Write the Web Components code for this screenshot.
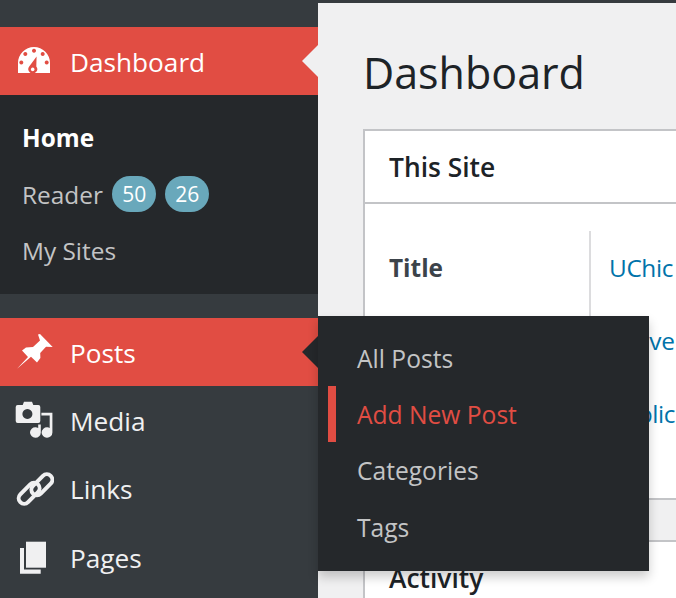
<!DOCTYPE html>
<html lang="en">
<head>
<meta charset="utf-8">
<title>Dashboard</title>
<style>
    html, body { margin: 0; height: 598px; overflow: hidden; background: #f0f0f1; }
    body { font-family: "Open Sans", "Liberation Sans", sans-serif; }
</style>
</head>
<body>
<wp-shell>
    <wp-sidebar slot="side">
        <wp-menu-item icon="dashboard" label="Dashboard" active arrow="#f0f0f1"></wp-menu-item>
        <wp-submenu>
            <wp-sub-item strong>Home</wp-sub-item>
            <wp-sub-item>Reader <wp-badge>50</wp-badge><wp-badge>26</wp-badge></wp-sub-item>
            <wp-sub-item>My Sites</wp-sub-item>
        </wp-submenu>
        <wp-menu-item class="after-sub" icon="pin" label="Posts" active arrow="#25282b">
            <wp-flyout>
                <wp-sub-item fly>All Posts</wp-sub-item>
                <wp-sub-item fly current>Add New Post</wp-sub-item>
                <wp-sub-item fly>Categories</wp-sub-item>
                <wp-sub-item fly>Tags</wp-sub-item>
            </wp-flyout>
        </wp-menu-item>
        <wp-menu-item icon="media" label="Media"></wp-menu-item>
        <wp-menu-item icon="links" label="Links"></wp-menu-item>
        <wp-menu-item icon="pages" label="Pages"></wp-menu-item>
    </wp-sidebar>
    <wp-page heading="Dashboard">
        <wp-card heading="This Site">
            <wp-site-table>
                <wp-site-row label="Title">UChic</wp-site-row>
                <wp-site-row>Active</wp-site-row>
                <wp-site-row>Public</wp-site-row>
            </wp-site-table>
        </wp-card>
        <wp-card heading="Activity"></wp-card>
    </wp-page>
</wp-shell>

<script>
const ICONS = {
    dashboard: `
        <path fill-rule="evenodd" d="M4 32V22A16 16 0 0 1 36 22V32Z
            M20 7.7a2 2 0 1 0 .01 0Z M11.3 11a2 2 0 1 0 .01 0Z M28.7 11a2 2 0 1 0 .01 0Z
            M7.3 19.5a2 2 0 1 0 .01 0Z M32.7 19.5a2 2 0 1 0 .01 0Z"/>
        <path fill="#e14d43" d="M22.6 15.5L22.3 25.5A4.4 4.4 0 1 1 15.2 25.6Z"/>
        <circle cx="18.7" cy="28.4" r="1.8"/>`,
    pin: `<path d="M3 36.8L14 25L8 18.6L12 15.4L19 15L26 8.6L24 2.4L26 2L38.7 15L32 14.7L26.2 21L26.4 26L23 30.5L17 24.8Z"/>`,
    media: `
        <path fill-rule="evenodd" d="M3.7 5H8.7L10 1.7H18L19.3 5H24.3A2 2 0 0 1 26.3 7V21A2 2 0 0 1 24.3 23H3.7A2 2 0 0 1 1.7 21V7A2 2 0 0 1 3.7 5Z
            M13.4 9a5 5 0 1 0 .01 0Z"/>
        <path d="M27.4 12.8H38.4V32.5A5.4 5.2 0 1 1 33.3 27.3Q34.7 27.3 35.7 28V15.6H27.4Z"/>
        <path d="M24.2 24.4H26.8V32.5A5.4 5.2 0 1 1 21.6 27.3Q23 27.3 24.2 28Z"/>`,
    links: `
        <g transform="rotate(-45 21.5 21)" fill="none" stroke="currentColor" stroke-width="4">
            <rect x="1.5" y="14" width="25" height="11" rx="5.5"/>
            <rect x="16.5" y="17" width="25" height="11" rx="5.5"/>
        </g>`,
    pages: `
        <path d="M12 4.7H32V30.7H12Z"/>
        <path d="M6 11H10V32.6H26.7V36.7H6Z"/>`
};

class WpIcon extends HTMLElement {
    connectedCallback() {
        this.attachShadow({ mode: 'open' });
        this.shadowRoot.innerHTML = `
            <style>
                :host { display: block; width: 40px; height: 40px; color: #f0f0f1; }
                svg { display: block; fill: currentColor; }
            </style>
            <svg width="40" height="40" viewBox="0 0 40 40">${ICONS[this.getAttribute('name')]}</svg>`;
    }
}

class WpShell extends HTMLElement {
    connectedCallback() {
        this.attachShadow({ mode: 'open' });
        this.shadowRoot.innerHTML = `
            <style>
                :host { display: flex; width: 676px; height: 598px; overflow: hidden; background: #363b3f; padding-top: 3px; box-sizing: border-box; }
                .side { flex: 0 0 318px; position: relative; z-index: 2; }
                .main { flex: 1; min-width: 0; }
            </style>
            <div class="side"><slot name="side"></slot></div>
            <div class="main"><slot></slot></div>`;
    }
}

class WpSidebar extends HTMLElement {
    connectedCallback() {
        this.attachShadow({ mode: 'open' });
        this.shadowRoot.innerHTML = `
            <style>
                :host { display: block; height: 100%; padding-top: 24px; box-sizing: border-box; background: #363b3f; }
                ::slotted(.after-sub) { margin-top: 24px; }
            </style>
            <slot></slot>`;
    }
}

class WpMenuItem extends HTMLElement {
    connectedCallback() {
        const active = this.hasAttribute('active');
        this.attachShadow({ mode: 'open' });
        this.shadowRoot.innerHTML = `
            <style>
                :host { display: block; position: relative; height: ${active ? '68px' : '68.34px'}; background: ${active ? '#e14d43' : 'transparent'}; }
                .row { display: flex; align-items: center; height: 100%; padding-left: 14px; gap: 16px; font-size: 26.2px; }
                wp-icon { color: ${active ? '#fff' : '#f0f0f1'}; }
                .label { color: ${active ? '#fff' : '#f0f0f1'}; padding-top: 2px; }
                .arrow { position: absolute; right: 0; top: 18px; width: 0; height: 0; border: 16px solid transparent; border-left: 0; border-right-color: ${this.getAttribute('arrow') || 'transparent'}; }
            </style>
            <div class="row">
                <wp-icon name="${this.getAttribute('icon')}"></wp-icon>
                <span class="label">${this.getAttribute('label')}</span>
            </div>
            ${active ? '<div class="arrow"></div>' : ''}
            <slot></slot>`;
    }
}

class WpSubmenu extends HTMLElement {
    connectedCallback() {
        this.attachShadow({ mode: 'open' });
        this.shadowRoot.innerHTML = `
            <style>
                :host { display: block; background: #25282b; padding: 15px 0 15px; }
            </style>
            <slot></slot>`;
    }
}

class WpSubItem extends HTMLElement {
    connectedCallback() {
        const fly = this.hasAttribute('fly');
        const current = this.hasAttribute('current');
        const strong = this.hasAttribute('strong');
        this.attachShadow({ mode: 'open' });
        this.shadowRoot.innerHTML = `
            <style>
                :host {
                    display: flex; align-items: center; position: relative; box-sizing: border-box;
                    height: ${fly ? '56.33px' : '56.3px'};
                    padding-left: ${fly ? '39px' : '22px'};
                    padding-bottom: ${strong ? '2px' : '0'};
                    font-size: ${fly ? '24.6px' : '24.4px'}; gap: 9.5px;
                    font-weight: ${strong ? 700 : 400};
                    color: ${current ? '#e14d43' : strong ? '#fff' : '#c3c4c5'};
                }
                .bar { position: absolute; left: 10px; top: 0; height: 56px; width: 8px; background: #e14d43; }
            </style>
            ${current ? '<div class="bar"></div>' : ''}
            <slot></slot>`;
    }
}

class WpBadge extends HTMLElement {
    connectedCallback() {
        this.attachShadow({ mode: 'open' });
        this.shadowRoot.innerHTML = `
            <style>
                :host { display: inline-flex; align-items: center; justify-content: center; width: 43.5px; height: 36px; border-radius: 18px; background: #69a8bb; color: #fff; font-size: 21px; }
            </style>
            <slot></slot>`;
    }
}

class WpFlyout extends HTMLElement {
    connectedCallback() {
        this.attachShadow({ mode: 'open' });
        this.shadowRoot.innerHTML = `
            <style>
                :host { display: block; position: absolute; left: 318px; top: -2px; width: 331px; height: 255px; padding-top: 14px; box-sizing: border-box; background: #25282b; box-shadow: 0 6px 10px rgba(0,0,0,.2); }
            </style>
            <slot></slot>`;
    }
}

class WpPage extends HTMLElement {
    connectedCallback() {
        this.attachShadow({ mode: 'open' });
        this.shadowRoot.innerHTML = `
            <style>
                :host { display: block; height: 100%; background: #f0f0f1; overflow: hidden; padding-left: 45px; box-sizing: border-box; }
                h1 { margin: 0; height: 126px; box-sizing: border-box; padding-top: 37px; font-size: 43px; line-height: 66px; font-weight: 400; color: #1d2327; white-space: nowrap; }
                .cards { display: flex; flex-direction: column; gap: 40px; width: 420px; }
            </style>
            <h1>${this.getAttribute('heading')}</h1>
            <div class="cards"><slot></slot></div>`;
    }
}

class WpCard extends HTMLElement {
    connectedCallback() {
        this.attachShadow({ mode: 'open' });
        this.shadowRoot.innerHTML = `
            <style>
                :host { display: block; background: #fff; border: 2px solid #c3c4c7; border-right: 0; }
                .head { height: 71px; display: flex; align-items: center; padding-left: 24px; font-size: 26.4px; font-weight: 600; color: #1d2327; border-bottom: 2px solid #c3c4c7; white-space: nowrap; }
            </style>
            <div class="head">${this.getAttribute('heading')}</div>
            <slot></slot>`;
    }
}

class WpSiteTable extends HTMLElement {
    connectedCallback() {
        this.attachShadow({ mode: 'open' });
        this.shadowRoot.innerHTML = `
            <style>
                :host { display: block; padding: 27px 0 48px; }
            </style>
            <slot></slot>`;
    }
}

class WpSiteRow extends HTMLElement {
    connectedCallback() {
        this.attachShadow({ mode: 'open' });
        this.shadowRoot.innerHTML = `
            <style>
                :host { display: grid; grid-template-columns: 224px 1fr; height: 73px; font-size: 24.4px; }
                .label, .value { display: flex; align-items: center; white-space: nowrap; }
                .label { padding-left: 24px; font-weight: 700; color: #3c434a; }
                .value { padding-left: 18px; border-left: 2px solid #dcdcde; color: #0073aa; letter-spacing: -0.4px; }
            </style>
            <div class="label">${this.getAttribute('label') || ''}</div>
            <div class="value"><slot></slot></div>`;
    }
}

customElements.define('wp-icon', WpIcon);
customElements.define('wp-shell', WpShell);
customElements.define('wp-sidebar', WpSidebar);
customElements.define('wp-menu-item', WpMenuItem);
customElements.define('wp-submenu', WpSubmenu);
customElements.define('wp-sub-item', WpSubItem);
customElements.define('wp-badge', WpBadge);
customElements.define('wp-flyout', WpFlyout);
customElements.define('wp-page', WpPage);
customElements.define('wp-card', WpCard);
customElements.define('wp-site-table', WpSiteTable);
customElements.define('wp-site-row', WpSiteRow);
</script>
</body>
</html>
